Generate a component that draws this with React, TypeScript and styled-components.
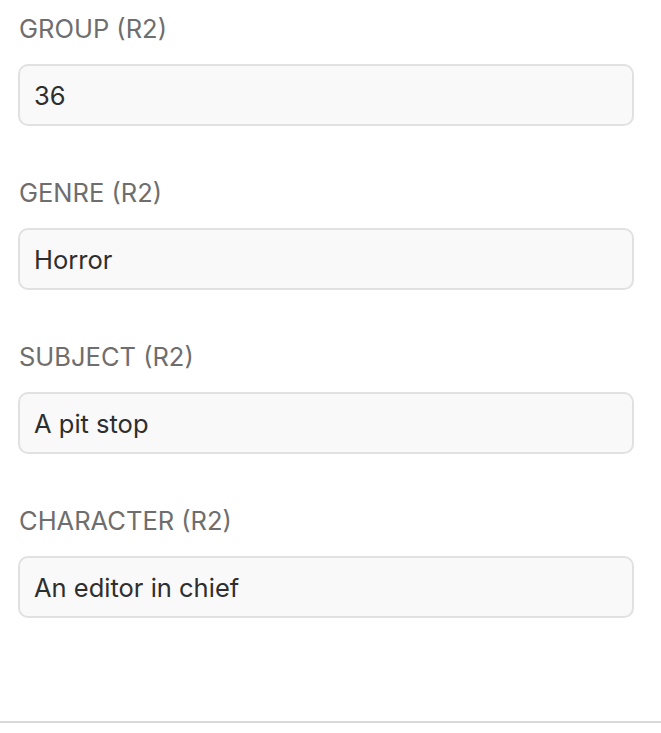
import React from 'react';
import styled, { createGlobalStyle } from 'styled-components';

const GlobalStyle = createGlobalStyle`
  html, body {
    margin: 0;
    padding: 0;
    background: #ffffff;
  }
  body {
    font-family: Inter, "Liberation Sans", Arial, sans-serif;
    -webkit-font-smoothing: antialiased;
  }
`;

const Page = styled.div`
  display: flex;
  flex-direction: column;
  height: 733px;
`;

const Form = styled.div`
  flex: 1;
  display: flex;
  flex-direction: column;
  gap: 52px;
  padding: 14px 27px 0 18px;
`;

const Field = styled.label`
  display: flex;
  flex-direction: column;
  gap: 20px;
`;

const Label = styled.span`
  font-size: 25.5px;
  line-height: 30px;
  color: #6e6e6e;
  padding-left: 1px;
`;

const Input = styled.input`
  box-sizing: border-box;
  height: 62px;
  width: 100%;
  padding: 0 14px;
  border: 2px solid #e1e1e1;
  border-radius: 10px;
  background: #f9f9f9;
  font-family: inherit;
  font-size: 25.5px;
  color: #2e2e2e;
  outline: none;
`;

const Footer = styled.div`
  height: 10px;
  border-top: 2px solid #d8d8d8;
`;

const fields = [
  { label: 'GROUP (R2)', value: '36' },
  { label: 'GENRE (R2)', value: 'Horror' },
  { label: 'SUBJECT (R2)', value: 'A pit stop' },
  { label: 'CHARACTER (R2)', value: 'An editor in chief' },
];

const App = () => {
  return (
    <Page>
      <GlobalStyle />
      <Form>
        {fields.map((item) => (
          <Field key={item.label}>
            <Label>{item.label}</Label>
            <Input defaultValue={item.value} readOnly />
          </Field>
        ))}
      </Form>
      <Footer />
    </Page>
  );
};

export default App;
